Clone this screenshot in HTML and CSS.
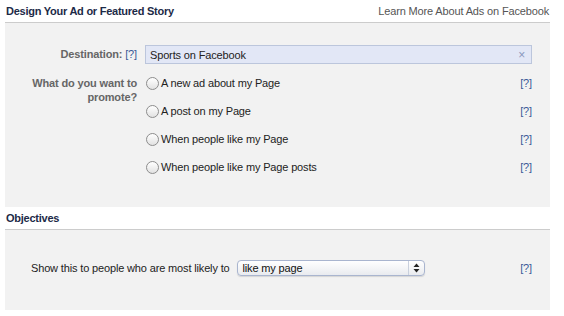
FILE: index.html
```html
<!DOCTYPE html>
<html lang="en">
<head>
  <meta charset="UTF-8" />
  <title>Design Your Ad</title>
  <link rel="stylesheet" href="styles.css">
</head>
<body>
  <div class="page">
    <div class="section-head">
      <h2>Design Your Ad or Featured Story</h2>
      <a class="head-link" href="#">Learn More About Ads on Facebook</a>
    </div>

    <div class="panel panel-design">
      <div class="form-row">
        <div class="label">Destination: <a class="help" href="#">[?]</a></div>
        <div class="field">
          <div class="token-input">
            <span>Sports on Facebook</span>
            <span class="remove">×</span>
          </div>
        </div>
      </div>

      <div class="form-row">
        <div class="label label-multi">What do you want to promote?</div>
        <div class="field">
          <div class="radio-row">
            <span class="radio"></span>
            <span class="radio-text">A new ad about my Page</span>
            <a class="help" href="#">[?]</a>
          </div>
          <div class="radio-row">
            <span class="radio"></span>
            <span class="radio-text">A post on my Page</span>
            <a class="help" href="#">[?]</a>
          </div>
          <div class="radio-row">
            <span class="radio"></span>
            <span class="radio-text">When people like my Page</span>
            <a class="help" href="#">[?]</a>
          </div>
          <div class="radio-row">
            <span class="radio"></span>
            <span class="radio-text">When people like my Page posts</span>
            <a class="help" href="#">[?]</a>
          </div>
        </div>
      </div>
    </div>

    <div class="section-head">
      <h2>Objectives</h2>
    </div>

    <div class="panel panel-objectives">
      <span class="objective-text">Show this to people who are most likely to</span>
      <div class="select-box">
        <span class="select-value">like my page</span>
        <span class="select-arrows">
          <svg width="7" height="10" viewBox="0 0 7 10">
            <path d="M3.5 0.5L6.5 4H0.5Z" fill="#222"/>
            <path d="M3.5 9.5L6.5 6H0.5Z" fill="#222"/>
          </svg>
        </span>
      </div>
      <a class="help" href="#">[?]</a>
    </div>
  </div>
</body>
</html>
```

FILE: styles.css
```css
:root {
  --panel: #f2f2f2;
  --rule: #cccccc;
  --text: #333333;
  --label: #666666;
  --link: #3b5998;
}

* {
  box-sizing: border-box;
  margin: 0;
  padding: 0;
}

body {
  font-family: 'Liberation Sans', Arial, sans-serif;
  font-size: 11px;
  letter-spacing: -0.15px;
  color: var(--text);
  background: #ffffff;
}

a {
  text-decoration: none;
}

.page {
  width: 550px;
  padding-left: 5px;
}

.section-head {
  height: 23px;
  display: flex;
  justify-content: space-between;
  align-items: center;
  border-bottom: 1px solid var(--rule);
  padding: 0 1px 1px 1px;
}

.section-head h2 {
  font-size: 11px;
  font-weight: bold;
  letter-spacing: -0.25px;
  color: #1c2a47;
}

.head-link {
  color: #555555;
}

.panel {
  background: var(--panel);
}

.panel-design {
  height: 184px;
  padding: 22px 18px 0 0;
}

.form-row {
  display: grid;
  grid-template-columns: 132px 1fr;
  column-gap: 8px;
}

.label {
  text-align: right;
  font-weight: bold;
  color: var(--label);
}

.label-multi {
  padding-top: 7px;
  padding-left: 24px;
  line-height: 14px;
}

.help {
  color: var(--link);
  font-weight: normal;
}

.form-row:first-child .label {
  line-height: 19px;
}

.token-input {
  height: 19px;
  display: flex;
  align-items: center;
  justify-content: space-between;
  padding: 0 6px 0 4px;
  background: #e2e7f6;
  border: 1px solid #bcc6dc;
  color: #222222;
  margin-bottom: 5px;
}

.remove {
  color: #8b98bd;
  font-size: 12px;
}

.radio-row {
  height: 28px;
  display: flex;
  align-items: center;
}

.radio {
  width: 13px;
  height: 13px;
  border-radius: 50%;
  border: 1px solid #8d8d8d;
  background: linear-gradient(#ffffff, #e2e2e2);
  margin: 0 2px 0 1px;
  flex: none;
}

.radio-text {
  color: #222222;
  flex: 1;
}

.panel-objectives {
  height: 80px;
  display: flex;
  align-items: center;
  padding: 0 18px 4px 26px;
}

.objective-text {
  color: #222222;
}

.select-box {
  width: 188px;
  height: 16px;
  margin-left: 7px;
  display: flex;
  align-items: center;
  border: 1px solid #a9b5cf;
  border-radius: 4px;
  background: linear-gradient(#ffffff, #e9ebef);
  box-shadow: 0 1px 1px rgba(0, 0, 0, 0.12);
  color: #111111;
}

.select-value {
  flex: 1;
  padding-left: 5px;
}

.select-arrows {
  width: 16px;
  height: 100%;
  border-left: 1px solid #c9d0dd;
  display: flex;
  align-items: center;
  justify-content: center;
}

.panel-objectives .help {
  margin-left: auto;
}
```
